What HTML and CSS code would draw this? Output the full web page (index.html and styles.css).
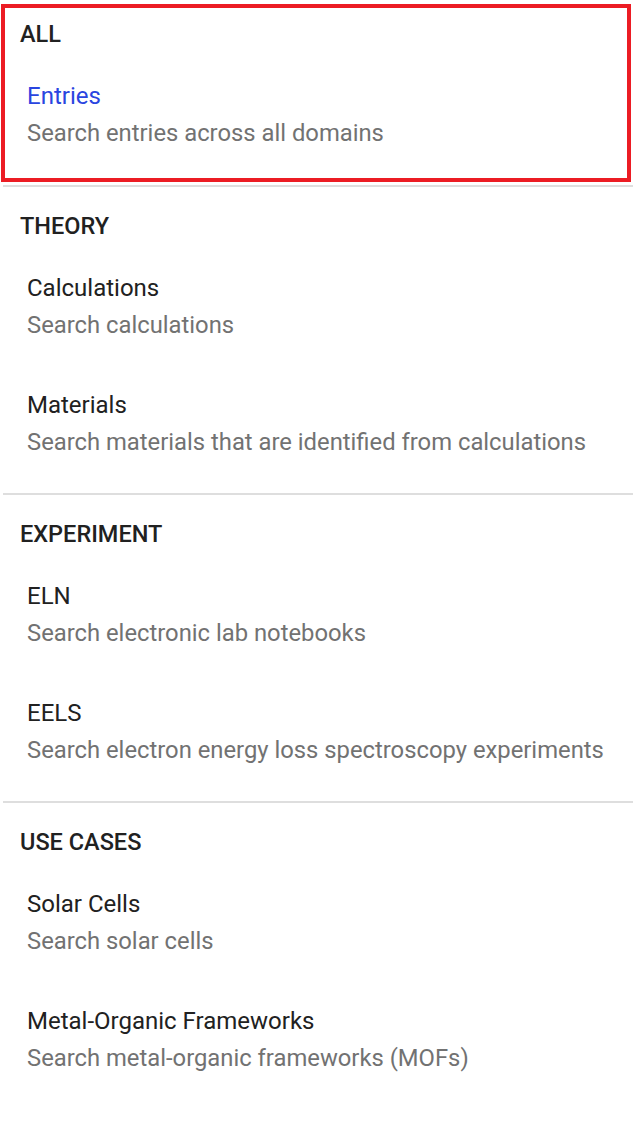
FILE: index.html
```html
<!DOCTYPE html>
<html lang="en">
<head>
<meta charset="utf-8">
<title>Search</title>
<link rel="stylesheet" href="styles.css">
</head>
<body>
<div class="menu">
  <section class="group group-selected">
    <div class="group-header">ALL</div>
    <a class="item item-active" href="#">
      <span class="item-title">Entries</span>
      <span class="item-desc">Search entries across all domains</span>
    </a>
  </section>
  <section class="group">
    <div class="group-header">THEORY</div>
    <a class="item" href="#">
      <span class="item-title">Calculations</span>
      <span class="item-desc">Search calculations</span>
    </a>
    <a class="item" href="#">
      <span class="item-title">Materials</span>
      <span class="item-desc">Search materials that are identified from calculations</span>
    </a>
  </section>
  <section class="group">
    <div class="group-header">EXPERIMENT</div>
    <a class="item" href="#">
      <span class="item-title">ELN</span>
      <span class="item-desc">Search electronic lab notebooks</span>
    </a>
    <a class="item" href="#">
      <span class="item-title">EELS</span>
      <span class="item-desc">Search electron energy loss spectroscopy experiments</span>
    </a>
  </section>
  <section class="group">
    <div class="group-header">USE CASES</div>
    <a class="item" href="#">
      <span class="item-title">Solar Cells</span>
      <span class="item-desc">Search solar cells</span>
    </a>
    <a class="item" href="#">
      <span class="item-title">Metal-Organic Frameworks</span>
      <span class="item-desc">Search metal-organic frameworks (MOFs)</span>
    </a>
  </section>
</div>
</body>
</html>
```

FILE: styles.css
```css
html, body {
  margin: 0;
  padding: 0;
  background: #ffffff;
}

body {
  font-family: Roboto, "Noto Sans", sans-serif;
  color: #212121;
}

.menu {
  display: flex;
  flex-direction: column;
  padding-left: 3px;
}

.group {
  display: flex;
  flex-direction: column;
  border-top: 2px solid #dedede;
  padding: 25px 0 12px 17px;
}

.group-selected {
  border: 4px solid #ec1c24;
  margin: 4px 2px 3px -2px;
  padding: 12px 0 6px 15px;
}

.group-header {
  font-size: 23.5px;
  line-height: 28px;
  font-weight: 500;
  color: #212121;
  padding-bottom: 7px;
}

.item {
  display: flex;
  flex-direction: column;
  padding: 23px 0 20px 7px;
  text-decoration: none;
}

.item-title {
  font-size: 24px;
  line-height: 36px;
  color: #212121;
}

.item-active .item-title {
  color: #2a45e0;
}

.item-desc {
  font-size: 23.8px;
  line-height: 38px;
  color: #727272;
}
```
